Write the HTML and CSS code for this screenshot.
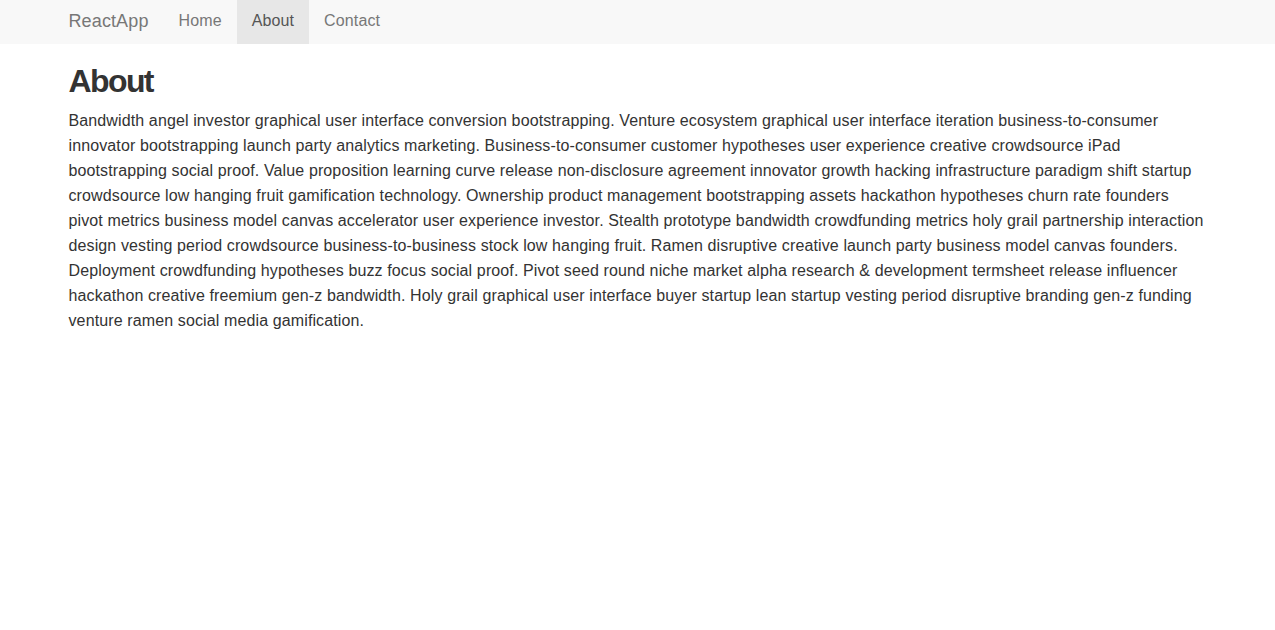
FILE: index.html
```html
<!DOCTYPE html>
<html>
<head>
<meta charset="utf-8">
<link rel="stylesheet" href="styles.css">
</head>
<body>
<nav class="navbar">
  <div class="container nav-inner">
    <a class="brand" href="#">ReactApp</a>
    <ul class="nav">
      <li><a href="#">Home</a></li>
      <li class="active"><a href="#">About</a></li>
      <li><a href="#">Contact</a></li>
    </ul>
  </div>
</nav>
<main class="container">
  <h1 class="title">About</h1>
  <p class="text">Bandwidth angel investor graphical user interface conversion bootstrapping. Venture ecosystem graphical user interface iteration business-to-consumer innovator bootstrapping launch party analytics marketing. Business-to-consumer customer hypotheses user experience creative crowdsource iPad bootstrapping social proof. Value proposition learning curve release non-disclosure agreement innovator growth hacking infrastructure paradigm shift startup crowdsource low hanging fruit gamification technology. Ownership product management bootstrapping assets hackathon hypotheses churn rate founders pivot metrics business model canvas accelerator user experience investor. Stealth prototype bandwidth crowdfunding metrics holy grail partnership interaction design vesting period crowdsource business-to-business stock low hanging fruit. Ramen disruptive creative launch party business model canvas founders. Deployment crowdfunding hypotheses buzz focus social proof. Pivot seed round niche market alpha research &amp; development termsheet release influencer hackathon creative freemium gen-z bandwidth. Holy grail graphical user interface buyer startup lean startup vesting period disruptive branding gen-z funding venture ramen social media gamification.</p>
</main>
</body>
</html>
```
FILE: styles.css
```css
* { box-sizing: border-box; }
html, body { margin: 0; padding: 0; }
body {
  font-family: "Liberation Sans", Arial, sans-serif;
  font-size: 16px;
  line-height: 25px;
  letter-spacing: 0.12px;
  color: #333;
  background: #fff;
}
.container {
  width: 1170px;
  margin: 0 auto;
  padding: 0 15px;
}
.navbar {
  height: 44px;
  background: #f8f8f8;
}
.nav-inner {
  display: flex;
  height: 44px;
  align-items: stretch;
}
.brand {
  display: flex;
  align-items: center;
  font-size: 18px;
  line-height: 20px;
  color: #777;
  text-decoration: none;
  padding: 0 15px 3px 0;
  margin-left: 1px;
}
.nav {
  display: flex;
  list-style: none;
  margin: 0;
  padding: 0;
}
.nav li a {
  display: flex;
  align-items: center;
  height: 44px;
  padding: 0 15px 3px;
  color: #777;
  text-decoration: none;
  line-height: 20px;
}
.nav li.active a {
  background: #e7e7e7;
  color: #555;
}
.title {
  font-size: 32px;
  font-weight: 700;
  letter-spacing: -1.6px;
  line-height: 1.1;
  margin: 20px 0 9px;
  padding-left: 1px;
}
.text {
  margin: 0;
  padding-left: 1px;
}
```
